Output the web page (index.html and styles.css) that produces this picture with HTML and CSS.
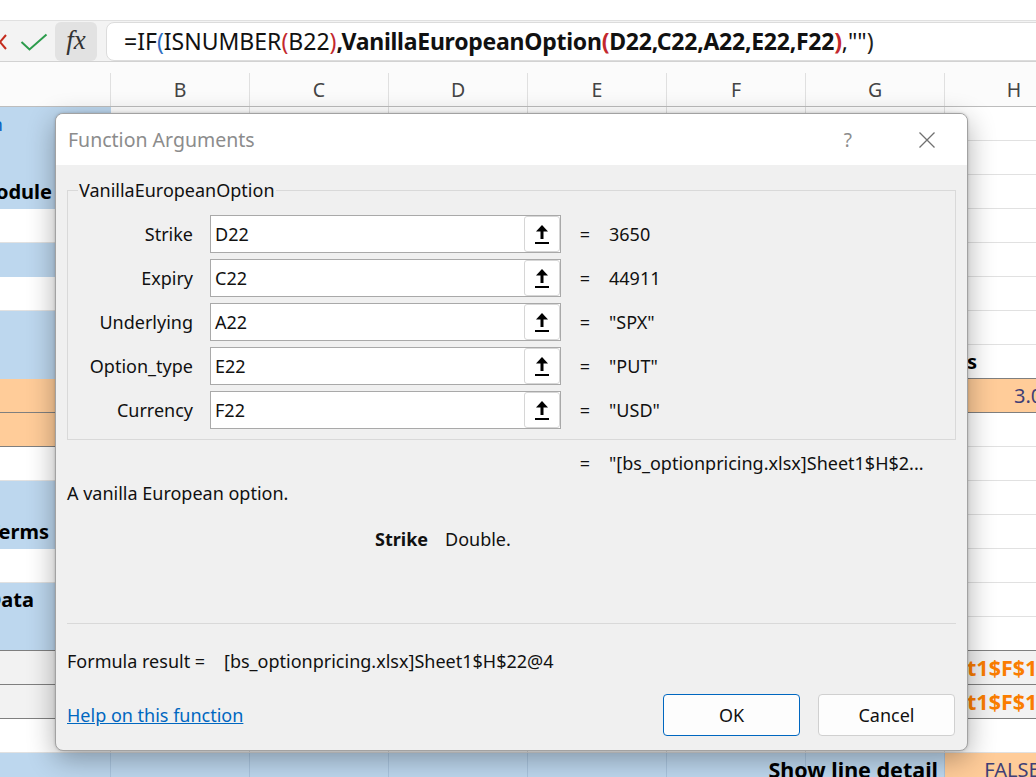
FILE: index.html
```html
<!DOCTYPE html>
<html>
<head>
<meta charset="utf-8">
<title>Function Arguments</title>
<link rel="stylesheet" href="styles.css">
</head>
<body>
<div class="app">
  <div class="ribbon"></div>
  <div class="fbar">
    <svg class="xicon" width="7" height="16" viewBox="7 0 7 16"><path d="M1 1 L13 15 M13 1 L1 15" stroke="#c42b1c" stroke-width="2" fill="none"/></svg>
    <svg class="check" width="28" height="18" viewBox="0 0 28 18"><polyline points="1.5,9 9.5,16.5 26.5,1.5" stroke="#2c9c4c" stroke-width="2" fill="none"/></svg>
    <div class="fx">fx</div>
    <div class="formula"><span>=IF</span><span class="pb">(</span><span>ISNUMBER</span><span class="pr">(</span><span>B22</span><span class="pr">)</span><b>,VanillaEuropeanOption<span class="pr">(</span>D22,C22,A22,E22,F22<span class="pr">)</span></b><span>,""</span><span class="pk">)</span></div>
  </div>

  <div class="sheet">
    <div class="colhead">
      <div class="h"></div><div class="h">B</div><div class="h">C</div><div class="h">D</div><div class="h">E</div><div class="h">F</div><div class="h">G</div><div class="h">H</div>
    </div>

    <div class="row"><div class="c a blue"><span class="lnk">Documentation</span></div><div class="c"></div><div class="c"></div><div class="c"></div><div class="c"></div><div class="c"></div><div class="c"></div><div class="c"></div></div>
    <div class="row"><div class="c a blue"></div><div class="c"></div><div class="c"></div><div class="c"></div><div class="c"></div><div class="c"></div><div class="c"></div><div class="c"></div></div>
    <div class="row"><div class="c a blue"><b class="pr58">Module</b></div><div class="c"></div><div class="c"></div><div class="c"></div><div class="c"></div><div class="c"></div><div class="c"></div><div class="c"></div></div>
    <div class="row"><div class="c a"></div><div class="c"></div><div class="c"></div><div class="c"></div><div class="c"></div><div class="c"></div><div class="c"></div><div class="c"></div></div>
    <div class="row"><div class="c a blue"></div><div class="c"></div><div class="c"></div><div class="c"></div><div class="c"></div><div class="c"></div><div class="c"></div><div class="c"></div></div>
    <div class="row"><div class="c a"></div><div class="c"></div><div class="c"></div><div class="c"></div><div class="c"></div><div class="c"></div><div class="c"></div><div class="c"></div></div>
    <div class="row"><div class="c a blue"></div><div class="c"></div><div class="c"></div><div class="c"></div><div class="c"></div><div class="c"></div><div class="c"></div><div class="c"></div></div>
    <div class="row"><div class="c a blue"></div><div class="c"></div><div class="c"></div><div class="c"></div><div class="c"></div><div class="c"></div><div class="c"></div><div class="c hx bb"><b>s</b></div></div>
    <div class="row"><div class="c a inp"></div><div class="c"></div><div class="c"></div><div class="c"></div><div class="c"></div><div class="c"></div><div class="c"></div><div class="c inp hnum">3.00</div></div>
    <div class="row"><div class="c a inp"></div><div class="c"></div><div class="c"></div><div class="c"></div><div class="c"></div><div class="c"></div><div class="c"></div><div class="c"></div></div>
    <div class="row"><div class="c a"></div><div class="c"></div><div class="c"></div><div class="c"></div><div class="c"></div><div class="c"></div><div class="c"></div><div class="c"></div></div>
    <div class="row"><div class="c a blue"></div><div class="c"></div><div class="c"></div><div class="c"></div><div class="c"></div><div class="c"></div><div class="c"></div><div class="c"></div></div>
    <div class="row"><div class="c a blue"><b class="pr61">Terms</b></div><div class="c"></div><div class="c"></div><div class="c"></div><div class="c"></div><div class="c"></div><div class="c"></div><div class="c"></div></div>
    <div class="row"><div class="c a"></div><div class="c"></div><div class="c"></div><div class="c"></div><div class="c"></div><div class="c"></div><div class="c"></div><div class="c"></div></div>
    <div class="row"><div class="c a blue"><b class="pr76">Data</b></div><div class="c"></div><div class="c"></div><div class="c"></div><div class="c"></div><div class="c"></div><div class="c"></div><div class="c"></div></div>
    <div class="row"><div class="c a blue bb"></div><div class="c"></div><div class="c"></div><div class="c"></div><div class="c"></div><div class="c"></div><div class="c"></div><div class="c bb"></div></div>
    <div class="row"><div class="c a calc"></div><div class="c"></div><div class="c"></div><div class="c"></div><div class="c"></div><div class="c"></div><div class="c"></div><div class="c calc hx">t1$F$19</div></div>
    <div class="row"><div class="c a calc"></div><div class="c"></div><div class="c"></div><div class="c"></div><div class="c"></div><div class="c"></div><div class="c"></div><div class="c calc hx">t1$F$19</div></div>
    <div class="row"><div class="c a"></div><div class="c"></div><div class="c"></div><div class="c"></div><div class="c"></div><div class="c"></div><div class="c"></div><div class="c"></div></div>
    <div class="row"><div class="c a blue2"></div><div class="c blue2"></div><div class="c blue2"></div><div class="c blue2"></div><div class="c blue2"></div><div class="c blue2"></div><div class="c blue2 a"><b class="pr6">Show line detail</b></div><div class="c inp hmid">FALSE</div></div>
  </div>

  <div class="dialog">
    <div class="titlebar">
      <span class="title">Function Arguments</span>
      <span class="help">?</span>
      <svg class="close" width="16" height="16" viewBox="0 0 16 16"><path d="M0.5 0.5 L15.5 15.5 M15.5 0.5 L0.5 15.5" stroke="#707070" stroke-width="1.3" fill="none"/></svg>
    </div>
    <div class="dbody">
      <fieldset class="group">
        <legend>VanillaEuropeanOption</legend>
        <div class="args">
          <div class="lbl">Strike</div>
          <div class="field"><span>D22</span><span class="pick"><svg width="14" height="19" viewBox="0 0 14 19"><polygon points="7,0 13,6.5 1,6.5" fill="#000"/><rect x="5.5" y="6" width="3" height="8" fill="#000"/><rect x="0" y="17" width="14" height="2" fill="#000"/></svg></span></div>
          <div class="eq">=</div><div class="val">3650</div>

          <div class="lbl">Expiry</div>
          <div class="field"><span>C22</span><span class="pick"><svg width="14" height="19" viewBox="0 0 14 19"><polygon points="7,0 13,6.5 1,6.5" fill="#000"/><rect x="5.5" y="6" width="3" height="8" fill="#000"/><rect x="0" y="17" width="14" height="2" fill="#000"/></svg></span></div>
          <div class="eq">=</div><div class="val">44911</div>

          <div class="lbl">Underlying</div>
          <div class="field"><span>A22</span><span class="pick"><svg width="14" height="19" viewBox="0 0 14 19"><polygon points="7,0 13,6.5 1,6.5" fill="#000"/><rect x="5.5" y="6" width="3" height="8" fill="#000"/><rect x="0" y="17" width="14" height="2" fill="#000"/></svg></span></div>
          <div class="eq">=</div><div class="val">"SPX"</div>

          <div class="lbl">Option_type</div>
          <div class="field"><span>E22</span><span class="pick"><svg width="14" height="19" viewBox="0 0 14 19"><polygon points="7,0 13,6.5 1,6.5" fill="#000"/><rect x="5.5" y="6" width="3" height="8" fill="#000"/><rect x="0" y="17" width="14" height="2" fill="#000"/></svg></span></div>
          <div class="eq">=</div><div class="val">"PUT"</div>

          <div class="lbl">Currency</div>
          <div class="field"><span>F22</span><span class="pick"><svg width="14" height="19" viewBox="0 0 14 19"><polygon points="7,0 13,6.5 1,6.5" fill="#000"/><rect x="5.5" y="6" width="3" height="8" fill="#000"/><rect x="0" y="17" width="14" height="2" fill="#000"/></svg></span></div>
          <div class="eq">=</div><div class="val">"USD"</div>
        </div>
      </fieldset>

      <div class="resrow"><div></div><div></div><div class="eq">=</div><div class="val">"[bs_optionpricing.xlsx]Sheet1$H$2...</div></div>
      <div class="desc">A vanilla European option.</div>
      <div class="argdesc"><b>Strike</b><span>Double.</span></div>
      <div class="sep"></div>
      <div class="fres"><span class="fl">Formula result =</span><span>[bs_optionpricing.xlsx]Sheet1$H$22@4</span></div>
      <div class="footer">
        <a class="link" href="#">Help on this function</a>
        <div class="btns">
          <button class="btn ok">OK</button>
          <button class="btn">Cancel</button>
        </div>
      </div>
    </div>
  </div>
</div>
</body>
</html>
```

FILE: styles.css
```css
* { box-sizing: border-box; }
html, body {
  margin: 0;
  width: 1036px;
  height: 777px;
  overflow: hidden;
  background: #fff;
  font-family: "Noto Sans", "Open Sans", sans-serif;
}
.app {
  position: relative;
  width: 1036px;
  height: 777px;
  overflow: hidden;
}

/* ribbon edge + formula bar */
.ribbon {
  height: 21px;
  background: #fff;
  border-bottom: 1px solid #e0e0e0;
  box-shadow: 0 1px 2px rgba(0,0,0,0.06);
}
.fbar {
  height: 41px;
  background: #f3f3f3;
  border-bottom: 1px solid #d2d2d2;
  padding-top: 1px;
  display: flex;
  align-items: stretch;
}
.xicon { align-self: center; flex: none; }
.check { align-self: center; margin-left: 13px; flex: none; }
.fx {
  margin-left: 7px;
  width: 42px;
  flex: none;
  background: #e2e2e2;
  border-radius: 6px;
  display: flex;
  align-items: center;
  justify-content: center;
  font-family: "Liberation Serif", "DejaVu Serif", serif;
  font-style: italic;
  font-size: 27px;
  color: #333;
  padding-bottom: 2px;
}
.formula {
  margin-left: 9px;
  width: 950px;
  flex: none;
  background: #fff;
  border: 1px solid #dcdcdc;
  border-radius: 8px;
  padding-left: 17px;
  font-size: 23px;
  line-height: 36px;
  white-space: nowrap;
  overflow: hidden;
  color: #111;
}
.formula b { font-weight: 700; letter-spacing: -0.25px; }
.pb { color: #2f6fc2; }
.pr { color: #c3282e; }
.pk { color: #222; }

/* sheet */
.colhead {
  display: grid;
  grid-template-columns: 111px repeat(7, 139px);
  height: 45px;
  padding-top: 11px;
  background: #fbfbfb;
  border-bottom: 1px solid #bdbdbd;
}
.h {
  border-right: 1px solid #e0e0e0;
  display: flex;
  align-items: center;
  justify-content: center;
  font-size: 19.5px;
  color: #444;
}
.row {
  display: grid;
  grid-template-columns: 111px repeat(7, 139px);
  height: 34px;
}
.c {
  border-right: 1px solid #e1e1e1;
  border-bottom: 1px solid #e1e1e1;
  background: #fff;
  display: flex;
  align-items: center;
  white-space: nowrap;
  font-size: 20px;
  color: #000;
  min-width: 0;
}
.c b { font-weight: 700; }
.a { justify-content: flex-end; }
.blue { background: #bdd7ee; border-color: #bdd7ee; }
.blue2 { background: #bdd7ee; border-right-color: #a9c4de; border-bottom-color: #bdd7ee; }
.inp { background: #ffcc99; border-color: #7f7f7f; color: #3f3f76; }
.calc { background: #f2f2f2; border-color: #7f7f7f; color: #fa7d00; font-weight: 700; font-size: 21.5px; }
.bb { border-bottom-color: #7f7f7f; }
.lnk { color: #0563c1; font-size: 18px; padding-right: 107px; }
.pr58 { padding-right: 58px; }
.pr61 { padding-right: 61px; }
.pr76 { padding-right: 76px; }
.pr6 { padding-right: 6px; font-size: 21.5px; }
.hx { padding-left: 22px; }
.hnum { padding-left: 69px; }
.hmid { justify-content: center; padding-right: 4px; }

/* dialog */
.dialog {
  position: absolute;
  left: 55px;
  top: 113px;
  width: 913px;
  height: 638px;
  border: 1px solid #a2a2a2;
  border-radius: 8px;
  background: #f0f0f0;
  box-shadow: 0 8px 28px rgba(0,0,0,0.32), 0 0 3px rgba(0,0,0,0.18);
  overflow: hidden;
  display: flex;
  flex-direction: column;
  font-size: 18px;
  line-height: 24px;
  color: #111;
}
.titlebar {
  height: 51px;
  flex: none;
  background: #fff;
  display: flex;
  align-items: center;
  padding-left: 12px;
}
.title { font-size: 19.5px; color: #8c8c8c; }
.help { margin-left: auto; font-size: 19px; color: #8c8c8c; }
.close { margin-left: 67px; margin-right: 32px; flex: none; }
.dbody {
  padding: 0 11px;
  display: flex;
  flex-direction: column;
}
.group {
  margin: 13px 0 0;
  border: 1px solid #d9d9d9;
  padding: 13px 0 10px 10px;
  min-width: 0;
}
.group legend {
  padding: 0 1px;
  font-size: 18px;
  line-height: 24px;
}
.args {
  display: grid;
  grid-template-columns: 132px 351px 48px 1fr;
  grid-auto-rows: 38px;
  row-gap: 6px;
  align-items: center;
}
.lbl { text-align: right; padding-right: 17px; }
.field {
  height: 38px;
  border: 1px solid #a9a9a9;
  background: #fff;
  display: flex;
  align-items: center;
  padding-left: 4px;
}
.pick {
  margin-left: auto;
  width: 36px;
  height: 36px;
  border: 1px solid #d6d6d6;
  border-radius: 3px;
  background: #fff;
  display: flex;
  align-items: center;
  justify-content: center;
}
.eq { text-align: center; }
.val { white-space: nowrap; }
.resrow {
  margin-top: 11px;
  display: grid;
  grid-template-columns: 143px 351px 48px 1fr;
  height: 24px;
}
.desc { margin-top: 6px; height: 24px; }
.argdesc {
  margin-top: 22px;
  height: 24px;
  padding-left: 308px;
  display: grid;
  grid-template-columns: 70px 1fr;
}
.argdesc b { font-weight: 700; }
.sep { margin-top: 72px; height: 1px; background: #d9d9d9; }
.fres { margin-top: 25px; height: 24px; display: flex; }
.fl { width: 157px; flex: none; }
.footer {
  margin-top: 21px;
  display: flex;
  align-items: center;
  justify-content: space-between;
}
.link { color: #0067c0; text-decoration: underline; font-size: 18px; }
.btns { display: flex; gap: 18px; margin-right: 1px; }
.btn {
  width: 137px;
  height: 42px;
  border: 1px solid #d0d0d0;
  border-radius: 4px;
  background: #fdfdfd;
  font-family: "Noto Sans", "Open Sans", sans-serif;
  font-size: 18px;
  color: #111;
  padding: 0;
}
.btn.ok { border-color: #0067c0; }
```
